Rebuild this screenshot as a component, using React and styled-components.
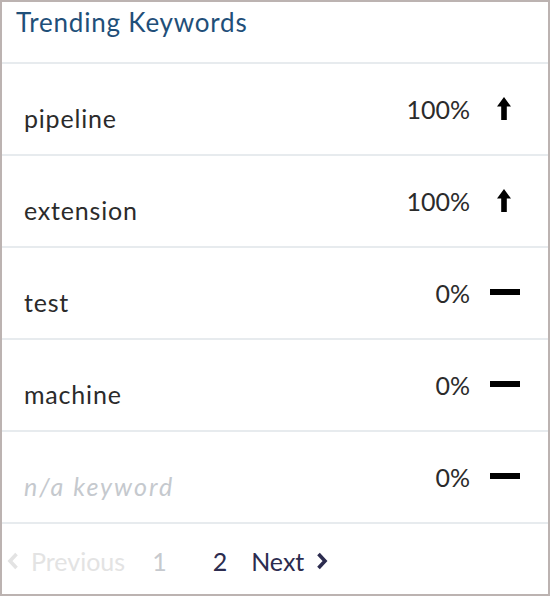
import styled, { createGlobalStyle } from 'styled-components'

const Global = createGlobalStyle`
  html, body { margin: 0; padding: 0; background: #fff; }
  * { box-sizing: border-box; }
`

const Card = styled.div`
  width: 550px;
  height: 596px;
  border: 2px solid #bcb3b1;
  background: #fff;
  font-family: Lato, "Open Sans", sans-serif;
  display: flex;
  flex-direction: column;
`

const Header = styled.div`
  height: 62px;
  padding: 4px 14px 0;
  border-bottom: 2px solid #e7ebee;
  color: #1f4f79;
  font-size: 26px;
  letter-spacing: 0.8px;
`

const Row = styled.div`
  height: 92px;
  padding: 0 28px 0 22px;
  border-bottom: 2px solid #e7ebee;
  display: flex;
  align-items: center;
`

const Keyword = styled.span`
  flex: 1;
  font-size: 25px;
  margin-top: 17px;
  letter-spacing: ${p => (p.$muted ? '2px' : '0.8px')};
  color: ${p => (p.$muted ? '#c5c9ce' : '#2b2b2b')};
  font-style: ${p => (p.$muted ? 'italic' : 'normal')};
`

const Percent = styled.span`
  font-size: 25px;
  color: #2b2b2b;
`

const Trend = styled.span`
  width: 30px;
  margin-left: 20px;
  display: flex;
  justify-content: center;
  & svg { flex-shrink: 0; }
`

const Pager = styled.div`
  flex: 1;
  display: flex;
  align-items: center;
  padding: 4px 0 0 4px;
  font-size: 25px;
  & svg { flex-shrink: 0; }
`

const PageLink = styled.span`
  display: flex;
  align-items: center;
  gap: ${p => p.$gap || 0}px;
  margin-right: ${p => p.$mr || 0}px;
  color: ${p => p.$color};
`

const UpArrow = () => (
  <svg width="14" height="23" viewBox="0 0 14 23" style={{ marginLeft: -3, marginTop: -2 }}>
    <path d="M7 0 L14 9.5 L9.8 9.5 L9.8 23 L4.2 23 L4.2 9.5 L0 9.5 Z" fill="#000" />
  </svg>
)

const Dash = () => (
  <svg width="30" height="6" viewBox="0 0 30 6" style={{ marginTop: -2 }}>
    <rect width="30" height="6" fill="#000" />
  </svg>
)

const Chevron = ({ dir, color }) => (
  <svg width="13" height="20" viewBox="0 0 13 20">
    <path
      d={dir === 'left' ? 'M10.5 3 L4 10 L10.5 17' : 'M2.5 3 L9 10 L2.5 17'}
      fill="none"
      stroke={color}
      strokeWidth="3.6"
    />
  </svg>
)

const rows = [
  { word: 'pipeline', pct: '100%', up: true },
  { word: 'extension', pct: '100%', up: true },
  { word: 'test', pct: '0%' },
  { word: 'machine', pct: '0%' },
  { word: 'n/a keyword', pct: '0%', muted: true },
]

export default function App() {
  return (
    <>
      <Global />
      <Card>
        <Header>Trending Keywords</Header>
        {rows.map(r => (
          <Row key={r.word}>
            <Keyword $muted={r.muted}>{r.word}</Keyword>
            <Percent>{r.pct}</Percent>
            <Trend>{r.up ? <UpArrow /> : <Dash />}</Trend>
          </Row>
        ))}
        <Pager>
          <PageLink $color="#e3e3e3" $gap={12} $mr={27}>
            <Chevron dir="left" color="#e3e3e3" />
            Previous
          </PageLink>
          <PageLink $color="#c6c9ce" $mr={46}>1</PageLink>
          <PageLink $color="#2c2c4f" $mr={24}>2</PageLink>
          <PageLink $color="#2c2c4f" $gap={12}>
            Next
            <Chevron dir="right" color="#2c2c4f" />
          </PageLink>
        </Pager>
      </Card>
    </>
  )
}
